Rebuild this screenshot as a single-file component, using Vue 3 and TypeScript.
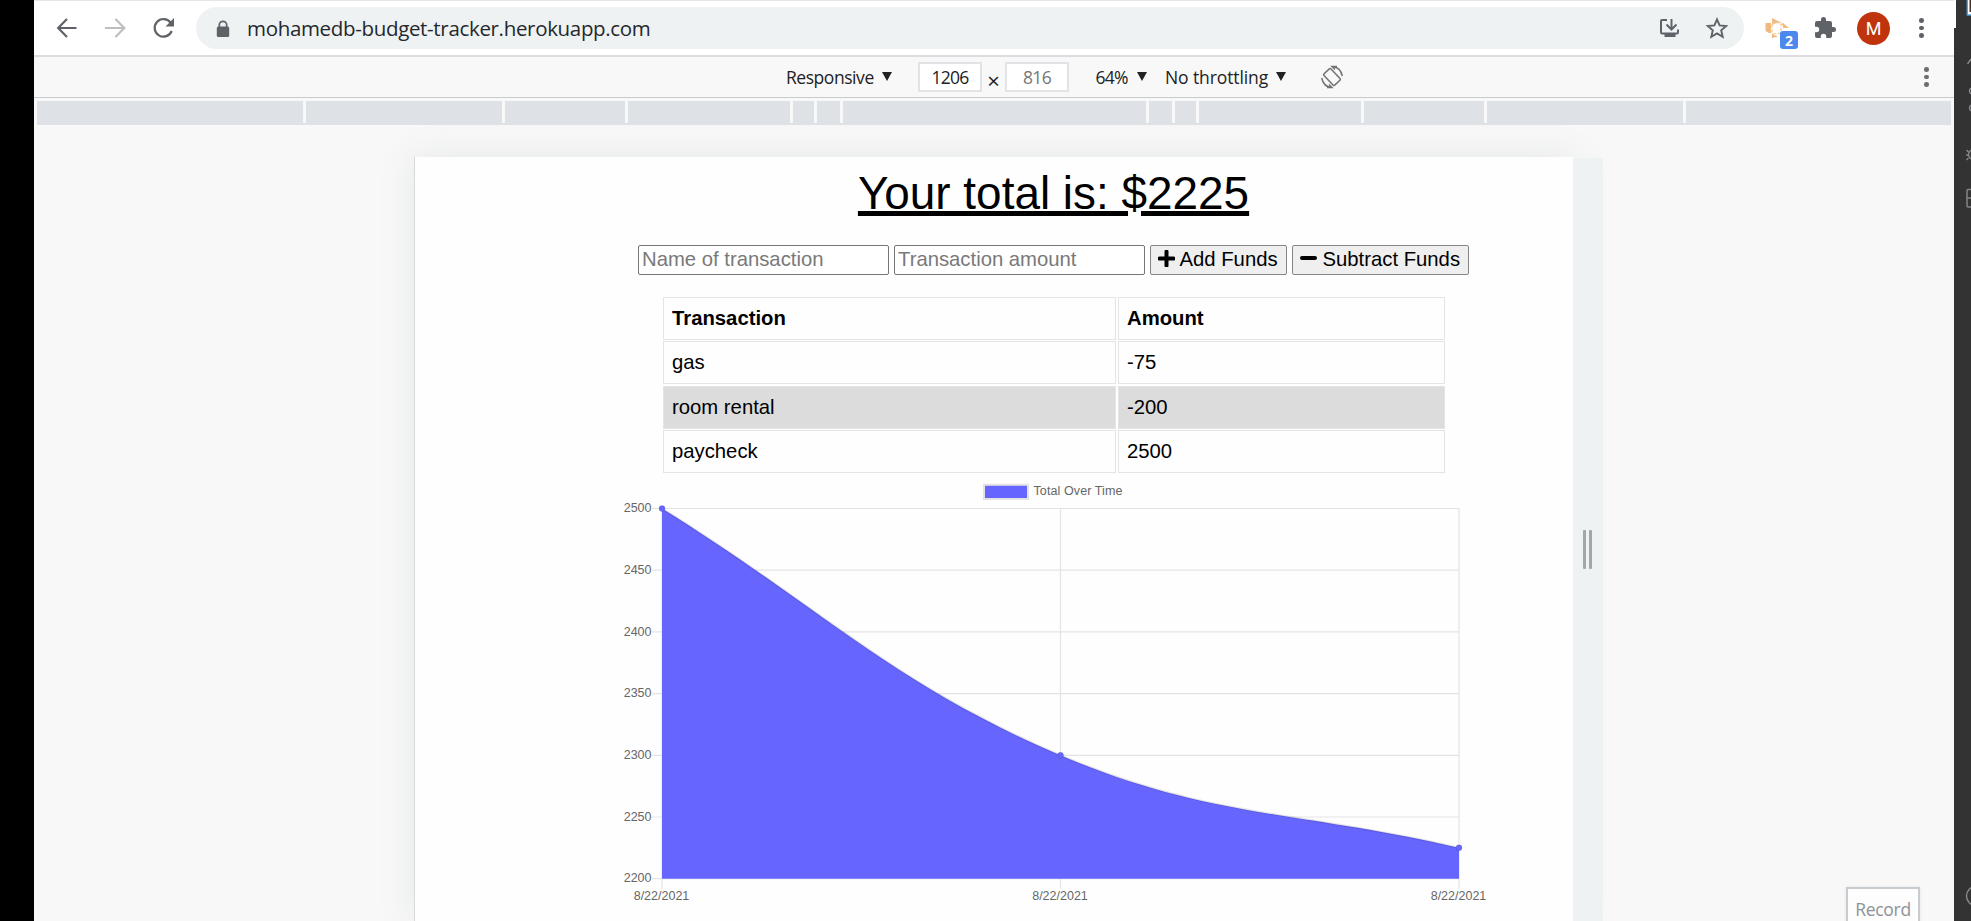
<script setup lang="ts">
interface Point { x: number; y: number }
interface Transaction { name: string; amount: number }

const transactions: Transaction[] = [
  { name: 'gas', amount: -75 },
  { name: 'room rental', amount: -200 },
  { name: 'paycheck', amount: 2500 },
]
const total = transactions.reduce((sum, t) => sum + t.amount, 0)

// Widths of the device-preset segments in the media ruler
const segments = [266, 196, 120, 162, 21, 23, 302, 23, 21, 162, 120, 196, 265]

// Chart geometry, in the chart's own coordinates
const plot = { left: 47, right: 844, top: 25.5, bottom: 395.7 }
const ticks = [2500, 2450, 2400, 2350, 2300, 2250, 2200]
const totals = [2500, 2300, 2225]
const yOf = (v: number) => plot.bottom - ((v - 2200) / 300) * (plot.bottom - plot.top)
const points: Point[] = totals.map((v, i) => ({
  x: plot.left + (i * (plot.right - plot.left)) / 2,
  y: yOf(v),
}))

const tension = 0.4
function controls(i: number): { before: Point; after: Point } {
  const cur = points[i]
  const prev = points[i - 1] ?? cur
  const next = points[i + 1] ?? cur
  const d1 = Math.hypot(cur.x - prev.x, cur.y - prev.y)
  const d2 = Math.hypot(next.x - cur.x, next.y - cur.y)
  const fa = (tension * d1) / (d1 + d2)
  const fb = (tension * d2) / (d1 + d2)
  const dx = next.x - prev.x
  const dy = next.y - prev.y
  return {
    before: { x: cur.x - fa * dx, y: cur.y - fa * dy },
    after: { x: cur.x + fb * dx, y: cur.y + fb * dy },
  }
}
let line = `M${points[0].x} ${points[0].y}`
for (let i = 1; i < points.length; i++) {
  const a = controls(i - 1).after
  const b = controls(i).before
  line += ` C${a.x} ${a.y} ${b.x} ${b.y} ${points[i].x} ${points[i].y}`
}
const area = `${line} V${plot.bottom} H${plot.left} Z`
</script>

<template>
  <div class="screen">
    <div class="browser">
      <header class="navbar">
        <svg class="nav-icons" width="140" height="55" viewBox="0 0 140 55" fill="none">
          <g stroke="#5f6368" stroke-width="2.2">
            <path d="M42.500 28H24.500M33 19L24.200 28L33 37" />
            <path d="M71 28H90M81.500 19L90.300 28L81.500 37" stroke="#bcbebf" />
            <path d="M136.500 22.500A8.800 8.800 0 1 0 137.700 31" />
          </g>
          <path d="M140 18V26.500H131.500Z" fill="#5f6368" />
        </svg>
        <div class="omnibox">
          <svg class="lock" width="14" height="18" viewBox="0 0 14 18">
            <path d="M3.300 8V5A3.700 3.700 0 0 1 10.700 5V8" fill="none" stroke="#5f6368" stroke-width="1.700" />
            <rect x="0.800" y="6.500" width="12.400" height="10.500" rx="1.500" fill="#5f6368" />
          </svg>
          <span class="url">mohamedb-budget-tracker.herokuapp.com</span>
          <svg class="box-icons" width="70" height="42" viewBox="0 0 70 42" fill="none">
            <g stroke="#5f6368" stroke-width="2">
              <path d="M9 13H4Q3 13 3 14V25Q3 26.500 4 26.500H19Q20 26.500 20 25V22.500M13.500 12V22M8.500 17.500L13.500 22.500L18.500 17.500" />
              <path d="M6.500 28.500H17.500" stroke-width="3" />
            </g>
            <path d="M59 12.300L61.600 18.400L68.200 19L63.200 23.300L64.700 29.800L59 26.400L53.300 29.800L54.800 23.300L49.800 19L56.400 18.400Z" stroke="#5f6368" stroke-width="1.900" />
          </svg>
        </div>
        <div class="extension">
          <svg width="36" height="36" viewBox="0 0 36 36">
            <path d="M1.500 9H7V19H5L1.500 17ZM8 4L18 9Q11 8 8 12ZM8 24V19Q10 22 14 22.500ZM19 9L25 14H19Q20 12 17 10Z" fill="#f0b97e" />
            <path d="M8 10Q12 7 17 10V18Q12 22 8 18Z" fill="none" stroke="#f5c797" stroke-width="1.200" stroke-dasharray="3 1.500" />
          </svg>
          <span class="badge">2</span>
        </div>
        <svg class="puzzle" width="24" height="24" viewBox="0 0 24 24" fill="#5f6368">
          <path d="M20.500 11H19V7a2 2 0 0 0-2-2h-4V3.500a2.500 2.500 0 0 0-5 0V5H4a2 2 0 0 0-2 2v3.800h1.500a2.700 2.700 0 0 1 0 5.400H2V20a2 2 0 0 0 2 2h3.800v-1.500a2.700 2.700 0 0 1 5.400 0V22H17a2 2 0 0 0 2-2v-4h1.500a2.500 2.500 0 0 0 0-5z" />
        </svg>
        <span class="avatar">M</span>
        <span class="dots menu"><i></i><i></i><i></i></span>
      </header>

      <div class="devbar">
        <span class="dev-label responsive">Responsive</span><i class="caret"></i>
        <span class="size first">1206</span>
        <span class="times">×</span>
        <span class="size second">816</span>
        <span class="dev-label zoom">64%</span><i class="caret"></i>
        <span class="dev-label throttle">No throttling</span><i class="caret"></i>
        <svg class="rotate" width="24" height="24" viewBox="0 0 24 24" fill="none" stroke="#737373" stroke-width="1.500">
          <rect x="7.200" y="4.200" width="9.600" height="15.600" rx="1.200" transform="rotate(-43 12 12)" />
          <path d="M12 1.500Q20.500 2 22.300 11M17 1.500L12 1.500L15 4.500M12 22.500Q3.500 22 1.700 13M7 22.500L12 22.500L9 19.500" />
        </svg>
        <span class="dots tools"><i></i><i></i><i></i></span>
      </div>

      <div class="ruler">
        <span v-for="(w, i) in segments" :key="i" :style="{ flexGrow: w }"></span>
      </div>

      <div class="stage">
        <main class="page">
          <h1>Your total is: ${{ total }}</h1>
          <div class="form">
            <input placeholder="Name of transaction" />
            <input placeholder="Transaction amount" />
            <button class="add">
              <svg width="17" height="17" viewBox="0 0 17 17"><path d="M8.500 1.500V15.500M1.500 8.500H15.500" stroke="#000" stroke-width="4" stroke-linecap="round" /></svg>Add Funds
            </button>
            <button class="subtract">
              <svg width="17" height="17" viewBox="0 0 17 17"><path d="M2 8H15" stroke="#000" stroke-width="4" stroke-linecap="round" /></svg>Subtract Funds
            </button>
          </div>
          <div class="table">
            <div class="row head"><span>Transaction</span><span>Amount</span></div>
            <div v-for="t in transactions" :key="t.name" class="row">
              <span>{{ t.name }}</span><span>{{ t.amount }}</span>
            </div>
          </div>
          <svg class="chart" width="877" height="438" viewBox="0 0 877 438">
            <rect x="369" y="1.800" width="44" height="14.200" fill="#6666ff" stroke="#e3e3e3" stroke-width="2" />
            <text class="legend" x="418.500" y="12.400">Total Over Time</text>
            <g stroke="#e3e3e3" stroke-width="1.200">
              <line v-for="t in ticks" :key="t" :x1="plot.left - 10" :x2="plot.right" :y1="yOf(t)" :y2="yOf(t)" />
              <line v-for="(p, i) in points" :key="i" :x1="p.x" :x2="p.x" :y1="plot.top" :y2="plot.bottom + 10" />
            </g>
            <path :d="area" fill="#6666ff" />
            <path :d="line" fill="none" stroke="#000" stroke-opacity="0.1" stroke-width="2.200" />
            <circle v-for="(p, i) in points" :key="i" :cx="p.x" :cy="p.y" r="3" fill="#6666ff" stroke="#000" stroke-opacity="0.1" />
            <g text-anchor="end">
              <text v-for="t in ticks" :key="t" :x="plot.left - 10.500" :y="yOf(t) + 3.600">{{ t }}</text>
            </g>
            <g text-anchor="middle">
              <text v-for="(p, i) in points" :key="i" :x="p.x - 0.500" y="417">8/22/2021</text>
            </g>
          </svg>
        </main>
        <div class="handle"><i></i><i></i></div>
        <div class="record">Record</div>
      </div>
    </div>

    <svg class="strip" width="17" height="921" viewBox="0 0 17 921" fill="none">
      <rect width="2" height="28" fill="#fff" />
      <rect x="13.300" y="-4" width="8" height="19" fill="#fff" stroke="#4ba5e8" stroke-width="1.400" />
      <rect x="15.500" y="0" width="2" height="12" fill="#4a3322" />
      <g stroke="#85858a" stroke-width="1.500">
        <path d="M13.500 64L17 59" />
        <circle cx="18.500" cy="91" r="3" />
        <circle cx="18.500" cy="108" r="3" />
        <path d="M12.500 150L14.500 152M12 155H15M12.500 160L14.500 158M17 150Q12 154.500 17 159" />
        <path d="M17 189.500H14Q13 189.500 13 191V206Q13 207 14 207H17M13 198H17" />
        <circle cx="22" cy="896" r="9.500" />
      </g>
    </svg>
  </div>
</template>

<style>
body { margin: 0; overflow: hidden; }
</style>

<style scoped>
.screen { display: flex; width: 1971px; height: 921px; background: #000; overflow: hidden; font-family: "Open Sans", "Noto Sans", sans-serif; }
.browser { width: 1920px; margin-left: 34px; display: flex; flex-direction: column; background: #f8f8f8; overflow: hidden; }
.strip { background: #333; flex: none; }
.navbar { height: 55px; flex: none; box-sizing: border-box; background: #fff; border-top: 1px solid #e6e6e6; border-bottom: 0; display: flex; align-items: flex-start; }
.nav-icons { margin-top: -1px; flex: none; }
.omnibox { margin: 6px 0 0 22px; width: 1548px; height: 42px; box-sizing: border-box; border-radius: 21px; background: #eef2f3; display: flex; align-items: center; padding-left: 20px; flex: none; }
.lock { margin-top: 2px; }
.url { margin-left: 17px; flex: 1; font-size: 20.5px; letter-spacing: -0.33px; color: #25282c; line-height: 40px; white-space: nowrap; }
.box-icons { margin-right: 16px; }
.extension { position: relative; margin: 13px 0 0 20px; width: 36px; height: 36px; }
.badge { position: absolute; left: 16px; top: 17px; width: 18px; height: 18px; border-radius: 3px; background: #4b89ee; color: #fff; font-size: 14px; font-weight: 700; line-height: 19px; text-align: center; }
.puzzle { margin: 15px 0 0 13px; }
.avatar { margin: 11px 0 0 20px; width: 33px; height: 33px; border-radius: 50%; background: #c0340d; color: #fff; font: 18px/34px Roboto, sans-serif; text-align: center; }
.dots { display: flex; flex-direction: column; gap: 3px; }
.dots i { width: 4.600px; height: 4.600px; border-radius: 50%; background: #5f6368; }
.menu { margin: 17px 0 0 29px; }
.devbar { height: 43px; flex: none; box-sizing: border-box; border-top: 2px solid #dcdce2; border-bottom: 1px solid #c9cbce; display: flex; align-items: center; padding-left: 752px; color: #222; font-size: 17.500px; white-space: nowrap; }
.dev-label { flex: none; }
.responsive { width: 96px; letter-spacing: -0.45px; }
.zoom { width: 41px; margin-left: 26.500px; letter-spacing: -0.8px; }
.throttle { width: 111px; margin-left: 18.500px; letter-spacing: -0.1px; }
.caret { width: 0; height: 0; border: 5px solid transparent; border-top: 9px solid #222; border-bottom: 0; margin-top: -2px; flex: none; }
.size { width: 64px; height: 30px; box-sizing: border-box; border: 2px solid #e2e3e5; background: #fff; text-align: center; line-height: 27px; letter-spacing: -0.7px; flex: none; }
.first { margin-left: 26px; }
.second { color: #777; }
.times { width: 23px; text-align: center; font-size: 22px; line-height: 20px; padding-top: 5px; flex: none; }
.rotate { margin-left: 34px; flex: none; }
.tools { margin-left: 580px; }
.tools i { background: #6e6e6e; }
.ruler { height: 24px; margin: 3px 3px 0; flex: none; display: flex; gap: 3px; background: linear-gradient(#f8f8f8 22px, #dee1e6 22px); }
.ruler span { background: #dee1e6; flex-basis: 0; }
.stage { flex: 1; display: flex; align-items: flex-start; position: relative; padding: 32px 0 0 380px; overflow: hidden; }
.page { width: 1159px; height: 764px; box-sizing: border-box; border-left: 1px solid #d8dada; padding-left: 119px; background: #fefefe; display: flex; flex-direction: column; align-items: center; box-shadow: 0 0 36px rgba(70, 100, 90, 0.11); font-family: "Liberation Sans", Arial, sans-serif; color: #000; flex: none; }
h1 { margin: 10px 0 0; font-size: 45.900px; line-height: 52px; font-weight: 400; text-decoration: underline; text-decoration-thickness: 4.500px; text-underline-offset: 2px; text-decoration-skip-ink: all; white-space: nowrap; }
.form { margin-top: 26px; display: flex; gap: 5px; height: 30px; }
.form input { width: 251px; height: 30px; box-sizing: border-box; border: 1px solid #767676; border-radius: 2px; padding: 0 4px 2px 3px; font: 20.300px "Liberation Sans", Arial, sans-serif; background: #fff; }
.form input::placeholder { color: #797979; }
.form button { height: 30px; box-sizing: border-box; border: 1px solid #858585; border-radius: 2px; background: #efefef; font: 20.300px "Liberation Sans", Arial, sans-serif; color: #000; display: flex; align-items: center; padding: 0 0 2px 7px; white-space: nowrap; }
.add { width: 137px; }
.subtract { width: 177px; }
.form svg { margin: -1px 4.500px 0 0; flex: none; }
.form .subtract svg { margin-right: 5.500px; }
.table { margin-top: 22px; width: 782px; display: flex; flex-direction: column; gap: 1.700px; }
.row { display: grid; grid-template-columns: 453px 327px; gap: 2px; height: 42.800px; font-size: 20.300px; line-height: 40.500px; }
.row span { border: 1px solid #e2e4e5; padding-left: 8.500px; box-sizing: border-box; }
.row.head { font-weight: 700; line-height: 40px; }
.row:nth-child(odd):not(.head) span { background: #dcdcdc; }
.chart { margin: 9.600px 0 0 81px; align-self: flex-start; flex: none; }
.chart text { font: 12.500px "Liberation Sans", Arial, sans-serif; fill: #666; }
.chart .legend { letter-spacing: 0.100px; }
.handle { margin-top: 1px; width: 30px; height: 763px; background: #eef2f3; display: flex; justify-content: center; gap: 3px; position: relative; padding: 372px 1px 0 0; box-sizing: border-box; flex: none; }
.handle i { width: 3px; height: 39px; border-radius: 1px; background: #a2a6a6; }
.record { position: absolute; right: 34px; bottom: -8px; width: 74px; height: 42px; box-sizing: border-box; border: 2px solid #c8ccd0; background: #fdfdfd; color: #8e9296; font-size: 17.500px; line-height: 41px; text-align: center; letter-spacing: -0.3px; box-shadow: 0 0 3px #dfe3e4; }
</style>
